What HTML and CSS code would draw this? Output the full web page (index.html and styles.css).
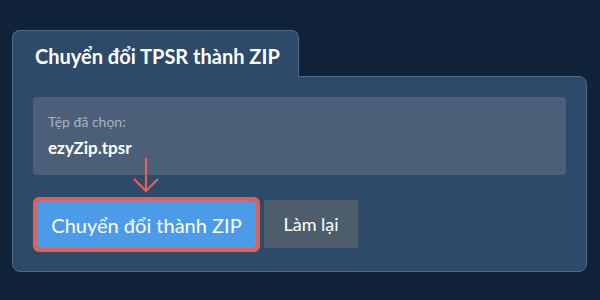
FILE: index.html
```html
<!DOCTYPE html>
<html lang="vi">
  <head>
    <meta charset="UTF-8" />
    <meta name="viewport" content="width=device-width, initial-scale=1.0" />
    <title>Chuyển đổi TPSR thành ZIP</title>
    <link rel="stylesheet" href="styles.css">
  </head>
  <body>
    <section class="convert">
      <div class="convert__tab">
        <h2>Chuyển đổi TPSR thành ZIP</h2>
      </div>
      <div class="convert__panel">
        <div class="file-box">
          <div class="file-box__label">Tệp đã chọn:</div>
          <div class="file-box__name">ezyZip.tpsr</div>
        </div>
        <div class="convert__actions">
          <svg class="hint-arrow" width="28" height="36" viewBox="0 0 28 36">
            <path d="M14 1 V34 M2 22 L14 34 L26 22" fill="none" stroke="#e0605a" stroke-width="2.2" />
          </svg>
          <button class="btn btn--primary">Chuyển đổi thành ZIP</button>
          <button class="btn btn--secondary">Làm lại</button>
        </div>
      </div>
    </section>
  </body>
</html>
```

FILE: styles.css
```css
body {
  margin: 0;
  background-color: #11233a;
  font-family: Lato, "Noto Sans", sans-serif;
  color: #fff;
}

.convert {
  padding: 30px 13px 0 12px;
}

.convert__tab {
  position: relative;
  z-index: 1;
  width: 285px;
  height: 46px;
  margin-bottom: -1px;
  background-color: #2d4a69;
  border: 1px solid #4f6b8b;
  border-bottom: none;
  border-radius: 8px 8px 0 0;
}
.convert__tab h2 {
  margin: 0;
  padding: 13px 0 0 22px;
  font-size: 20px;
  font-weight: 700;
  line-height: 24px;
}

.convert__panel {
  height: 154px;
  padding: 20px;
  background-color: #2d4a69;
  border: 1px solid #4f6b8b;
  border-radius: 0 8px 8px 8px;
}

.file-box {
  height: 78px;
  box-sizing: border-box;
  padding: 16px 15px 0;
  background-color: #4b5f78;
  border-radius: 4px;
}
.file-box__label {
  font-size: 14px;
  line-height: 17px;
  color: #a7b2c0;
}
.file-box__name {
  margin-top: 8px;
  font-size: 17px;
  font-weight: 700;
  line-height: 20px;
}

.convert__actions {
  position: relative;
  display: flex;
  align-items: flex-end;
  gap: 4px;
  margin-top: 25px;
  padding-left: 4px;
}

.hint-arrow {
  position: absolute;
  left: 99px;
  top: -43px;
}

.btn {
  border: none;
  border-radius: 3px;
  color: #fff;
  font-family: Lato, "Noto Sans", sans-serif;
  cursor: pointer;
}
.btn--primary {
  width: 219px;
  height: 47px;
  margin-right: 4px;
  font-size: 20px;
  background-color: #4c9be8;
  outline: 4px solid #e0605a;
  border-radius: 2px;
}
.btn--secondary {
  width: 94px;
  height: 48px;
  font-size: 18px;
  background-color: #4e5d6c;
}
```
